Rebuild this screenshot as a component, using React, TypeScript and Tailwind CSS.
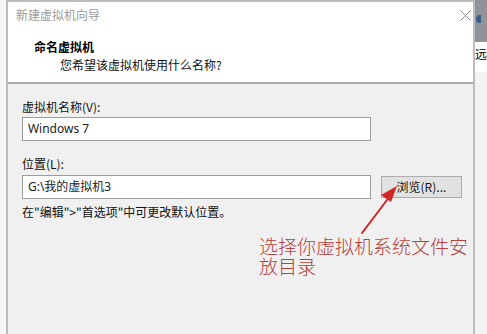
import React from "react";

const ui = { fontFamily: '"Noto Sans", "Noto Sans CJK SC", sans-serif' };
const cjk = { fontFamily: '"Noto Sans CJK SC", "Noto Sans", sans-serif' };

export default function App() {
  return (
    <div className="relative flex w-[487px] h-[334px] overflow-hidden bg-[#f4f4f4]" style={cjk}>
      <div className="w-[6px] bg-[#f6f6f6]" />
      <div className="flex flex-col w-[474px] border-x-2 border-t-2 border-[#bdbdbd]">
        <div className="relative h-[82px] bg-white border-b-2 border-[#a9a9a9]">
          <div className="pl-[8px] pt-[5px] text-[12px] leading-[16px] text-[#9a9a9a]">新建虚拟机向导</div>
          <svg className="absolute left-[452px] top-[8px]" width="11" height="11" viewBox="0 0 11 11">
            <path d="M0.5 0.5 L10.5 10.5 M10.5 0.5 L0.5 10.5" stroke="#8a8a8a" strokeWidth="1" />
          </svg>
          <div className="pl-[26px] pt-[15px] text-[12px] leading-[17px] font-bold text-black">命名虚拟机</div>
          <div className="pl-[52px] pt-[1px] text-[12px] leading-[17px] text-[#111]">您希望该虚拟机使用什么名称?</div>
        </div>
        <div className="flex-1 bg-[#f0f0f0] pl-[14px] pt-[15px]">
          <div className="text-[12px] leading-[16px] text-[#111]">虚拟机名称(V):</div>
          <div className="mt-[2px] w-[349px] h-[24px] border border-[#9c9c9c] bg-white pl-[5px] flex items-center text-[12px] text-[#222]" style={ui}>Windows 7</div>
          <div className="mt-[15px] text-[12px] leading-[16px] text-[#111]">位置(L):</div>
          <div className="mt-[3px] flex items-center">
            <div className="w-[349px] h-[24px] border border-[#9c9c9c] bg-white pl-[5px] flex items-center text-[12px] text-[#222]" style={ui}>G:\我的虚拟机3</div>
            <div className="ml-[10px] w-[81px] h-[22px] border border-[#adadad] bg-[#e1e1e1] flex items-center justify-center text-[12px] text-[#111]">浏览(R)...</div>
          </div>
          <div className="mt-[5px] text-[12px] leading-[16px] text-[#111]">在"编辑"&gt;"首选项"中可更改默认位置。</div>
        </div>
      </div>
      <div className="flex-1 flex flex-col bg-[#f2f2f2]">
        <div className="h-[42px] bg-[#8f949a] relative">
          <div className="absolute left-[1px] top-[15px] w-[5px] h-[8px] bg-[#3a5f8c] rounded-l-full" />
        </div>
        <div className="h-[30px] bg-white text-[12px] leading-[16px] pt-[4px] text-black overflow-hidden">远</div>
      </div>

      <svg className="absolute left-0 top-0" width="487" height="334" viewBox="0 0 487 334">
        <line x1="362" y1="233" x2="390" y2="196" stroke="#d42525" strokeWidth="2" strokeLinecap="round" />
        <polygon points="397,186 381,195 391,202" fill="#d42525" />
      </svg>
      <div
        className="absolute left-[259px] top-[236px] w-[215px] text-[19px] leading-[20px] text-[#b3423c]"
        style={{ fontFamily: '"Noto Sans CJK SC", serif', fontWeight: 300 }}
      >
        选择你虚拟机系统文件安放目录
      </div>
    </div>
  );
}
